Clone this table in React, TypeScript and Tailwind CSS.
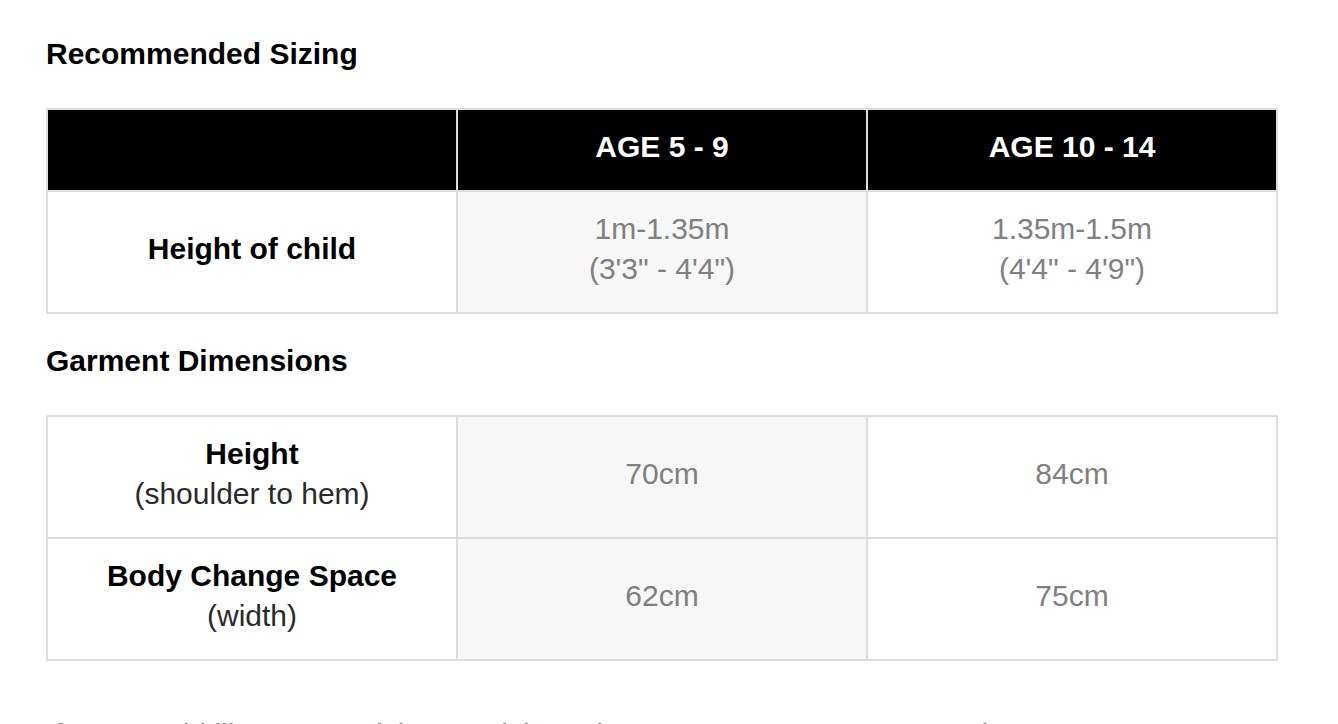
const SIZING = [
  { label: "Height of child", sub: null, a: ["1m-1.35m", "(3'3\" - 4'4\")"], b: ["1.35m-1.5m", "(4'4\" - 4'9\")"] },
];

const GARMENT = [
  { label: "Height", sub: "(shoulder to hem)", a: ["70cm"], b: ["84cm"] },
  { label: "Body Change Space", sub: "(width)", a: ["62cm"], b: ["75cm"] },
];

type Row = { label: string; sub: string | null; a: string[]; b: string[] };

function BodyRow({ row }: { row: Row }) {
  return (
    <tr className="h-[122px]">
      <td className="w-[410px] border-2 border-[#dddddd] pb-[6px] text-center align-middle">
        <div className="font-bold text-black">{row.label}</div>
        {row.sub && <div className="text-[#2a2a2a]">{row.sub}</div>}
      </td>
      <td className="w-[410px] border-2 border-[#dddddd] bg-[#f7f7f7] pb-[6px] text-center align-middle text-[#808080]">
        {row.a.map((t) => (
          <div key={t}>{t}</div>
        ))}
      </td>
      <td className="w-[410px] border-2 border-[#dddddd] pb-[6px] text-center align-middle text-[#808080]">
        {row.b.map((t) => (
          <div key={t}>{t}</div>
        ))}
      </td>
    </tr>
  );
}

export default function App() {
  return (
    <div className="min-h-screen bg-white pl-[46px] pt-[38px] text-[30px] leading-[40px] font-['Liberation_Sans',Arial,sans-serif] overflow-hidden">
      <h2 className="font-bold text-black leading-[32px] text-[30px]">Recommended Sizing</h2>

      <table className="mt-[38px] w-[1232px] border-collapse table-fixed">
        <thead>
          <tr className="h-[82px] bg-black">
            <th className="border-2 border-[#dddddd]" />
            <th className="border-2 border-[#dddddd] pb-[6px] font-bold text-white">AGE 5 - 9</th>
            <th className="border-2 border-[#dddddd] pb-[6px] font-bold text-white">AGE 10 - 14</th>
          </tr>
        </thead>
        <tbody>
          {SIZING.map((r) => (
            <BodyRow key={r.label} row={r} />
          ))}
        </tbody>
      </table>

      <h2 className="mt-[31px] font-bold text-black leading-[32px] text-[30px]">Garment Dimensions</h2>

      <table className="mt-[38px] w-[1232px] border-collapse table-fixed">
        <tbody>
          {GARMENT.map((r) => (
            <BodyRow key={r.label} row={r} />
          ))}
        </tbody>
      </table>

      <p className="mt-[54px] w-[1232px] text-[#808080] whitespace-nowrap">
        If you would like some advice on sizing, please contact Customer Service on 212 0 000 000
      </p>
    </div>
  );
}
